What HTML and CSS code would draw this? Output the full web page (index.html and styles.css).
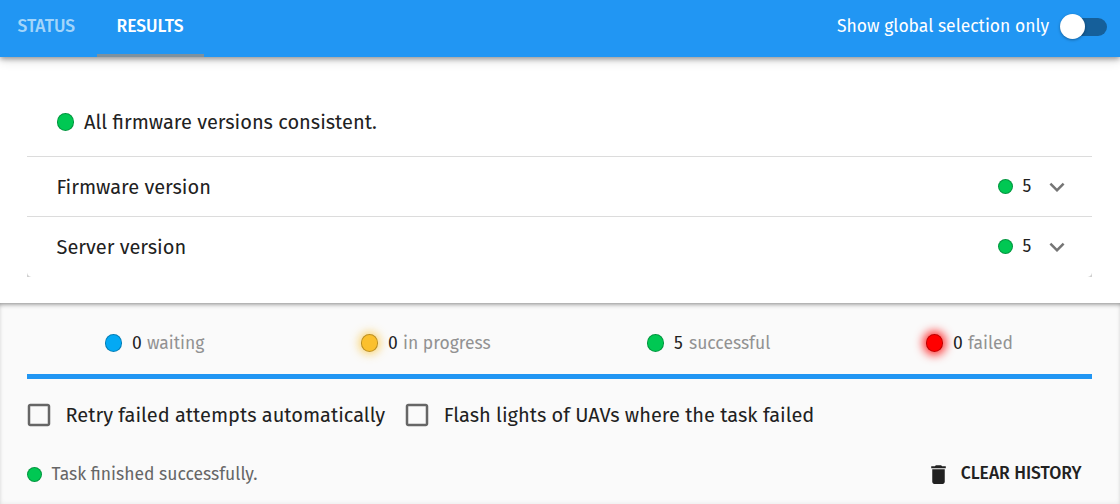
FILE: index.html
```html
<!DOCTYPE html>
<html lang="en">
<head>
    <meta charset="UTF-8">
    <meta name="viewport" content="width=device-width, initial-scale=1.0">
    <title>Firmware update</title>
    <link rel="stylesheet" href="styles.css">
</head>
<body>
    <header class="app-bar">
        <nav class="tabs">
            <a class="tab tab-status">STATUS</a>
            <a class="tab tab-results active">RESULTS</a>
        </nav>
        <label class="switch-label">
            <span>Show global selection only</span>
            <span class="switch"><span class="thumb"></span></span>
        </label>
    </header>

    <main class="results">
        <div class="summary">
            <span class="light large success"></span>
            <span>All firmware versions consistent.</span>
        </div>
        <div class="accordion">
            <div class="accordion-row">
                <span class="title">Firmware version</span>
                <span class="light success"></span>
                <span class="count">5</span>
                <svg class="chevron" viewBox="0 0 24 24"><path d="M16.59 8.59 12 13.17 7.41 8.59 6 10l6 6 6-6z"/></svg>
            </div>
            <div class="accordion-row last">
                <span class="title">Server version</span>
                <span class="light success"></span>
                <span class="count">5</span>
                <svg class="chevron" viewBox="0 0 24 24"><path d="M16.59 8.59 12 13.17 7.41 8.59 6 10l6 6 6-6z"/></svg>
            </div>
        </div>
    </main>

    <footer class="panel">
        <div class="stats">
            <div class="stat"><span class="light large info"></span><b>0</b><span>waiting</span></div>
            <div class="stat"><span class="light large warning"></span><b>0</b><span>in progress</span></div>
            <div class="stat"><span class="light large success"></span><b>5</b><span>successful</span></div>
            <div class="stat"><span class="light large error"></span><b>0</b><span>failed</span></div>
        </div>
        <div class="progress"></div>
        <div class="options">
            <label class="option">
                <svg class="checkbox" viewBox="0 0 24 24"><path d="M19 5v14H5V5h14m0-2H5c-1.100 0-2 .9-2 2v14c0 1.100.9 2 2 2h14c1.100 0 2-.9 2-2V5c0-1.100-.9-2-2-2z"/></svg>
                <span>Retry failed attempts automatically</span>
            </label>
            <label class="option">
                <svg class="checkbox" viewBox="0 0 24 24"><path d="M19 5v14H5V5h14m0-2H5c-1.100 0-2 .9-2 2v14c0 1.100.9 2 2 2h14c1.100 0 2-.9 2-2V5c0-1.100-.9-2-2-2z"/></svg>
                <span>Flash lights of UAVs where the task failed</span>
            </label>
        </div>
        <div class="actions">
            <span class="light success"></span>
            <span class="message">Task finished successfully.</span>
            <a class="clear">
                <svg class="trash" viewBox="0 0 24 24"><path d="M6 19c0 1.100.9 2 2 2h8c1.100 0 2-.9 2-2V7H6v12zM19 4h-3.500l-1-1h-5l-1 1H5v2h14V4z"/></svg>
                <span>CLEAR HISTORY</span>
            </a>
        </div>
    </footer>
</body>
</html>
```
FILE: styles.css
```css
* {
    box-sizing: border-box;
}
body {
    margin: 0;
    height: 504px;
    display: flex;
    flex-direction: column;
    overflow: hidden;
    background-color: #fff;
    color: #212121;
    font-family: "Fira Sans", "Noto Sans", sans-serif;
    font-size: 17.5px;
    line-height: 24px;
    white-space: nowrap;
}

/* Top bar */
.app-bar {
    display: flex;
    justify-content: space-between;
    height: 57px;
    padding-right: 13px;
    background-color: #2196f3;
    color: #fff;
    box-shadow: 0 2px 5px rgba(0, 0, 0, 0.35), 0 4px 10px rgba(0, 0, 0, 0.12);
    z-index: 1;
}
.tabs {
    display: flex;
}
.tab {
    height: 57px;
    padding-top: 15px;
    font-weight: 500;
    border-bottom: 3px solid transparent;
}
.tab-status {
    width: 97px;
    padding-left: 17.5px;
    color: #a3d5fa;
}
.tab-results {
    width: 107px;
    padding-left: 19.5px;
}
.tab.active {
    border-bottom-color: #7c919f;
}
.switch-label {
    display: flex;
    align-items: center;
    height: 53px;
    gap: 11px;
}
.switch {
    display: flex;
    align-items: center;
    width: 47px;
    height: 18px;
    border-radius: 9px;
    background-color: #155f9a;
}
.thumb {
    width: 25px;
    height: 25px;
    border-radius: 50%;
    background-color: #fff;
    box-shadow: 0 1px 3px rgba(0, 0, 0, 0.35);
}

/* Status lights */
.light {
    flex: none;
    width: 15px;
    height: 15px;
    border-radius: 50%;
    border: 1px solid rgba(0, 0, 0, 0.25);
}
.light.large {
    width: 17.5px;
    height: 17.5px;
}
.success {
    background-color: #00c853;
}
.info {
    background-color: #03a9f4;
}
.warning {
    background-color: #fbc02d;
    box-shadow: 0 0 10px 2px rgba(251, 192, 45, 0.7);
}
.error {
    background-color: #f00;
    box-shadow: 0 0 10px 3px rgba(255, 0, 0, 0.8);
}

/* Version list */
.results {
    height: 246px;
    padding: 31px 28px 0 27px;
}
.summary {
    display: flex;
    align-items: center;
    height: 68px;
    padding-left: 29.5px;
    gap: 10px;
    font-size: 20px;
}
.accordion-row {
    display: flex;
    align-items: center;
    height: 60px;
    padding: 0 20px 0 29.5px;
    border-top: 1px solid #dcdcdc;
}
/* faint corners under the last row */
.accordion-row.last {
    height: 61px;
    padding-bottom: 1px;
    background-image:
        radial-gradient(circle at top right, transparent 4.5px, #d0d0d0 5.5px),
        radial-gradient(circle at top left, transparent 4.5px, #d0d0d0 5.5px);
    background-position: bottom left, bottom right;
    background-size: 5px 5px;
    background-repeat: no-repeat;
}
.title {
    flex: 1;
    font-size: 20px;
}
.count {
    width: 10px;
    margin: 0 9.5px 0 9.5px;
}
.chevron {
    width: 30px;
    height: 30px;
    fill: #757575;
}

/* Bottom panel */
.panel {
    height: 201px;
    padding: 20px 28px 0 27px;
    background-color: #fafafa;
    box-shadow: inset 0 4px 5px -3px rgba(0, 0, 0, 0.45), inset 0 0 5px rgba(0, 0, 0, 0.07);
}
.stats {
    display: grid;
    grid-template-columns: 256px 286px 279px 1fr;
    height: 40px;
    padding-left: 77.5px;
}
.stat {
    display: flex;
    align-items: center;
    color: #929292;
}
.stat b,
.stat b + span {
    padding-top: 1px;
}
.stat b {
    width: 10px;
    margin: 0 5px 0 10px;
    color: #212121;
    font-weight: 400;
}
.progress {
    height: 5px;
    margin-top: 11px;
    background-color: #2196f3;
}
.options {
    display: flex;
    height: 72px;
    margin-left: -3px;
    gap: 17px;
}
.option {
    display: flex;
    align-items: center;
    gap: 11.5px;
    font-size: 20px;
}
.checkbox {
    width: 30px;
    height: 30px;
    fill: #666;
}
.actions {
    display: flex;
    align-items: center;
    height: 46px;
    gap: 9.5px;
}
.message {
    padding-top: 1px;
    color: #666;
}
.clear {
    display: flex;
    align-items: center;
    margin-left: auto;
    padding-right: 10.5px;
    gap: 10px;
    font-weight: 500;
}
.trash {
    width: 25px;
    height: 25px;
    fill: #212121;
}
```
